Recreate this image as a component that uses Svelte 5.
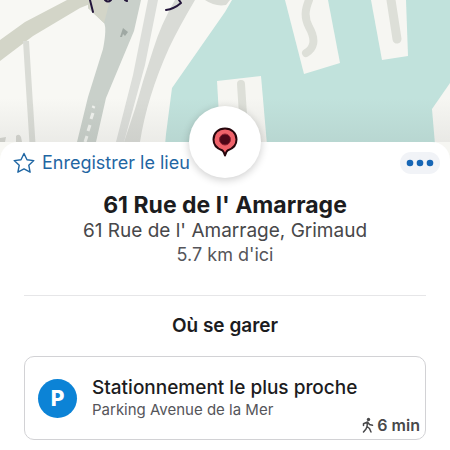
<script lang="ts">
  interface Place {
    name: string;
    address: string;
    distance: string;
  }

  interface Parking {
    title: string;
    name: string;
    walk: string;
  }

  const place: Place = {
    name: "61 Rue de l' Amarrage",
    address: "61 Rue de l' Amarrage, Grimaud",
    distance: "5.7 km d'ici"
  };

  const parkings: Parking[] = [
    {
      title: 'Stationnement le plus proche',
      name: 'Parking Avenue de la Mer',
      walk: '6 min'
    }
  ];

  let saved = $state(false);
</script>

<main>
  <div class="map">
    <svg viewBox="0 0 450 168" preserveAspectRatio="xMidYMin slice" aria-hidden="true">
      <defs>
        <linearGradient id="fade" x1="0" y1="0" x2="0" y2="1">
          <stop offset="0" stop-color="#555" stop-opacity="0" />
          <stop offset="1" stop-color="#555" stop-opacity="0.08" />
        </linearGradient>
      </defs>
      <rect width="450" height="168" fill="#f8f8f4" />

      <!-- water -->
      <path d="M232 0H450V168H163L166 134L172 88L225 12Z" fill="#c1e2dc" />
      <path d="M205 0H230L226 5Q215 7 205 0Z" fill="#dadcd6" />

      <!-- quays -->
      <g fill="#f6f6f2">
        <path d="M285 0H328L340 63L304 74Z" />
        <path d="M371 0H406L408 56L382 60Z" />
        <path d="M217 81L261 76L269 168H222Z" />
        <path d="M450 83L432 109L437 168H450Z" />
      </g>
      <g fill="none" stroke="#dddfd8" stroke-width="8" stroke-linecap="round">
        <path d="M309 0C305 10 304 17 309 27C317 41 313 49 306 53" />
        <path d="M391 0L397 39" stroke-width="9" />
        <path d="M241 84L244 130" />
      </g>

      <!-- roads -->
      <path d="M67 0H100L80 8L33 36L0 61V40L25 22Z" fill="#d3d5c8" />
      <path d="M23 41H29L37 168H31Z" fill="#dadcd6" />
      <path d="M88 0H141L134 31L106 98L96 142L92 168H68L77 142L88 97L103 49Q107 28 104 23L88 8Z" fill="#c9d0ca" />
      <path d="M88 0H110L104 23L88 8Z" fill="#d3d5c8" />
      <path d="M148 0H158L145 65L124 142H116L133 75Z" fill="#dcdeda" />
      <path d="M175 0H195Q179 27 169 48Q147 97 140 142H124L135 109Q143 80 153 50Q161 24 175 0Z" fill="#d9dbd6" />
      <path d="M0 138L6 137L5 142H0ZM16 136Q19 133 21 137L22 142H16Z" fill="#d5d6d0" />
      <g fill="none" stroke="#f0f2ee" stroke-width="3">
        <path d="M94 106L93 108M93 113L91 119M90 125L88 131M87 136L85 142" />
      </g>
      <path d="M123 28L128 32L125 36L123 34L122 37H120Z" fill="#9fa8a3" />

      <!-- freehand marks crossing the top edge -->
      <g fill="none" stroke="#24163b" stroke-width="2" stroke-linecap="round" stroke-linejoin="round">
        <path d="M90 0L93 12M105 0Q108 3 111 0M125 0L127 1M166 10Q174 9 181 3L179 0" />
      </g>
      <rect y="98" width="450" height="44" fill="url(#fade)" />
    </svg>
  </div>

  <section class="sheet">
    <div class="pin">
      <svg viewBox="0 0 28 30" width="28" height="30" aria-hidden="true">
        <path
          d="M14 1.500C7.300 1.500 2.500 6.200 2.500 12.500C2.500 17.500 6 21.500 11 23.200C12.500 24 13.200 26 14 28.500C14.800 26 15.500 24 17 23.200C22 21.500 25.500 17.500 25.500 12.500C25.500 6.200 20.700 1.500 14 1.500Z"
          fill="#ef626a"
          stroke="#26060c"
          stroke-width="2"
          stroke-linejoin="round"
        />
        <circle cx="14" cy="12.500" r="5.500" fill="#4d0718" stroke="#8f1f31" stroke-width="1" />
      </svg>
    </div>

    <div class="actions">
      <button class="save" type="button" aria-pressed={saved} onclick={() => (saved = !saved)}>
        <svg viewBox="0 0 24 24" width="24" height="24" aria-hidden="true">
          <path
            d="M12 2.500L15 8.800L21.800 9.600L16.800 14.300L18.100 21.200L12 17.900L5.900 21.200L7.200 14.300L2.200 9.600L9 8.800Z"
            fill={saved ? 'currentColor' : 'none'}
            stroke="currentColor"
            stroke-width="1.400"
            stroke-linejoin="round"
          />
        </svg>
        Enregistrer le lieu
      </button>
      <button class="more" type="button" aria-label="Plus d'options">
        <svg viewBox="0 0 28 8" width="28" height="8" aria-hidden="true">
          <circle cx="4" cy="4" r="3.300" />
          <circle cx="14" cy="4" r="3.300" />
          <circle cx="24" cy="4" r="3.300" />
        </svg>
      </button>
    </div>

    <header>
      <h1>{place.name}</h1>
      <p class="address">{place.address}</p>
      <p class="distance">{place.distance}</p>
    </header>

    <hr />

    <h2>Où se garer</h2>
    {#each parkings as parking (parking.name)}
      <button class="card" type="button">
        <span class="badge">P</span>
        <span class="info">
          <span class="title">{parking.title}</span>
          <span class="name">{parking.name}</span>
        </span>
        <span class="walk">
          <svg viewBox="0 0 12 16" width="12" height="16" aria-hidden="true">
            <circle cx="6.500" cy="2.500" r="1.700" fill="currentColor" />
            <path
              d="M1.500 8.500V6.800L5.500 5L7.500 7.500L10.500 8.300M5.500 5L5 9.500L7.500 11.500L9 15M5 9.500L4 12L1.500 15"
              fill="none"
              stroke="currentColor"
              stroke-width="1.500"
              stroke-linejoin="round"
              stroke-linecap="round"
            />
          </svg>
          {parking.walk}
        </span>
      </button>
    {/each}
  </section>
</main>

<style>
  :global(body) {
    margin: 0;
    background: #fff;
  }

  main {
    font-family: Inter, 'Liberation Sans', sans-serif;
    color: #1c1c1e;
  }

  button {
    border: 0;
    background: none;
    padding: 0;
    font: inherit;
    color: inherit;
    cursor: pointer;
  }

  h1,
  h2,
  p {
    margin: 0;
  }

  svg {
    display: block;
    flex: none;
  }

  .map {
    height: 168px;
  }

  .map svg {
    width: 100%;
    height: 100%;
  }

  .sheet {
    position: relative;
    margin-top: -26px;
    padding-bottom: 10px;
    border-radius: 18px 18px 0 0;
    background: #fff;
  }

  .pin {
    position: absolute;
    top: -36px;
    left: 50%;
    display: grid;
    place-items: center;
    width: 72px;
    height: 72px;
    margin-left: -36px;
    border-radius: 50%;
    background: #fff;
    box-shadow: 0 2px 8px rgba(0, 0, 0, 0.2);
  }

  .actions {
    display: flex;
    align-items: center;
    justify-content: space-between;
    padding: 8px 10px 0 12px;
  }

  .save {
    display: flex;
    align-items: center;
    gap: 6px;
    color: #1f66a3;
    font-size: 18px;
    line-height: 26px;
  }

  .more {
    display: grid;
    place-items: center;
    width: 40px;
    height: 22px;
    border-radius: 11px;
    background: #f1f3f7;
  }

  .more svg {
    fill: #1766b5;
  }

  header {
    margin-top: 15px;
    text-align: center;
  }

  h1 {
    font-size: 23px;
    font-weight: 700;
    line-height: 28px;
  }

  .address {
    color: #48484a;
    font-size: 19px;
    line-height: 24px;
  }

  .distance {
    color: #55555a;
    font-size: 18px;
    line-height: 24px;
  }

  hr {
    margin: 28px 24px 0;
    border: 0;
    border-top: 1px solid #e6e6e8;
  }

  h2 {
    margin: 18px 0;
    font-size: 19px;
    font-weight: 600;
    line-height: 24px;
    text-align: center;
  }

  .card {
    position: relative;
    display: flex;
    align-items: center;
    gap: 15px;
    box-sizing: border-box;
    width: calc(100% - 48px);
    min-height: 84px;
    margin: 0 24px;
    padding: 0 13px;
    border: 1px solid #d2d2d5;
    border-radius: 10px;
    text-align: left;
  }

  .badge {
    display: grid;
    flex: none;
    place-items: center;
    width: 39px;
    height: 39px;
    border-radius: 50%;
    background: #0c83d6;
    color: #fff;
    font-size: 21px;
    font-weight: 800;
  }

  .info {
    display: grid;
  }

  .title {
    font-size: 19px;
    font-weight: 500;
    line-height: 24px;
  }

  .name {
    color: #55555a;
    font-size: 15px;
    line-height: 20px;
  }

  .walk {
    position: absolute;
    right: 5px;
    bottom: 4px;
    display: flex;
    align-items: center;
    gap: 3px;
    color: #48484a;
    font-size: 16px;
    font-weight: 600;
    line-height: 20px;
  }
</style>
